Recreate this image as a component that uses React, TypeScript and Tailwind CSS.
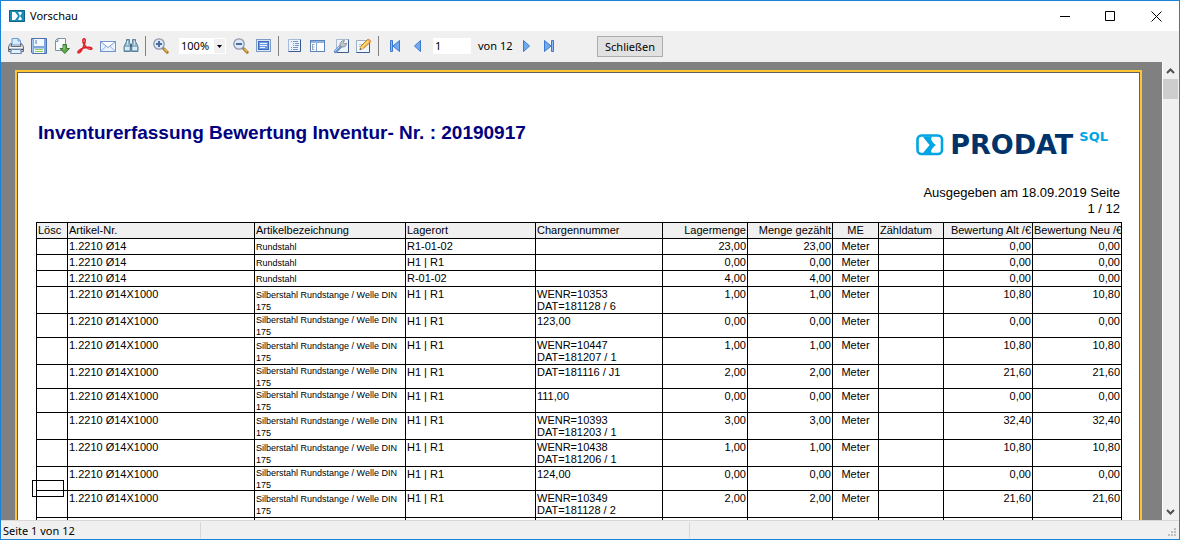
import type { ReactNode } from 'react'

interface Row {
  artikel: string
  name: string
  lagerort: string
  charge: string[]
  menge: string
  wert: string
}

const STANGE = 'Silberstahl Rundstange / Welle DIN 175'

const ROWS: Row[] = [
  { artikel: '1.2210 Ø14', name: 'Rundstahl', lagerort: 'R1-01-02', charge: [], menge: '23,00', wert: '0,00' },
  { artikel: '1.2210 Ø14', name: 'Rundstahl', lagerort: 'H1 | R1', charge: [], menge: '0,00', wert: '0,00' },
  { artikel: '1.2210 Ø14', name: 'Rundstahl', lagerort: 'R-01-02', charge: [], menge: '4,00', wert: '0,00' },
  { artikel: '1.2210 Ø14X1000', name: STANGE, lagerort: 'H1 | R1', charge: ['WENR=10353', 'DAT=181128 / 6'], menge: '1,00', wert: '10,80' },
  { artikel: '1.2210 Ø14X1000', name: STANGE, lagerort: 'H1 | R1', charge: ['123,00'], menge: '0,00', wert: '0,00' },
  { artikel: '1.2210 Ø14X1000', name: STANGE, lagerort: 'H1 | R1', charge: ['WENR=10447', 'DAT=181207 / 1'], menge: '1,00', wert: '10,80' },
  { artikel: '1.2210 Ø14X1000', name: STANGE, lagerort: 'H1 | R1', charge: ['DAT=181116 / J1'], menge: '2,00', wert: '21,60' },
  { artikel: '1.2210 Ø14X1000', name: STANGE, lagerort: 'H1 | R1', charge: ['111,00'], menge: '0,00', wert: '0,00' },
  { artikel: '1.2210 Ø14X1000', name: STANGE, lagerort: 'H1 | R1', charge: ['WENR=10393', 'DAT=181203 / 1'], menge: '3,00', wert: '32,40' },
  { artikel: '1.2210 Ø14X1000', name: STANGE, lagerort: 'H1 | R1', charge: ['WENR=10438', 'DAT=181206 / 1'], menge: '1,00', wert: '10,80' },
  { artikel: '1.2210 Ø14X1000', name: STANGE, lagerort: 'H1 | R1', charge: ['124,00'], menge: '0,00', wert: '0,00' },
  { artikel: '1.2210 Ø14X1000', name: STANGE, lagerort: 'H1 | R1', charge: ['WENR=10349', 'DAT=181128 / 2'], menge: '2,00', wert: '21,60' },
  // cut off by the lower edge of the preview
  { artikel: '', name: '', lagerort: '', charge: [], menge: '', wert: '' },
]

const COLUMNS = [
  { label: 'Lösc', width: 'w-[31px]', align: 'text-left' },
  { label: 'Artikel-Nr.', width: 'w-[187px]', align: 'text-left' },
  { label: 'Artikelbezeichnung', width: 'w-[151px]', align: 'text-left' },
  { label: 'Lagerort', width: 'w-[130px]', align: 'text-left' },
  { label: 'Chargennummer', width: 'w-[127px]', align: 'text-left' },
  { label: 'Lagermenge', width: 'w-[85px]', align: 'text-right' },
  { label: 'Menge gezählt', width: 'w-[85px]', align: 'text-right' },
  { label: 'ME', width: 'w-[46px]', align: 'text-center' },
  { label: 'Zähldatum', width: 'w-[65px]', align: 'text-left' },
  { label: 'Bewertung Alt /€', width: 'w-[89px]', align: 'text-right' },
  { label: 'Bewertung Neu /€', width: 'w-[89px]', align: 'text-right' },
]

function Svg({ children }: { children: ReactNode }) {
  return (
    <svg width="16" height="16" viewBox="0 0 16 16" fill="none" aria-hidden="true">
      {children}
    </svg>
  )
}

function PrinterIcon() {
  return (
    <Svg>
      <path d="M4 7V.5h6.5L12.5 3v4z" fill="#dcecff" stroke="#6c9bd8" />
      <path d="M10 .5V3h2.5" stroke="#6c9bd8" />
      <path d="M2.5 5.5h1v3h9v-3h1l2 3v5H.5v-5z" fill="#c3c7cd" stroke="#666c75" />
      <path d="M1.5 9.500h13" stroke="#f4f6f8" />
      <path d="M1 11.5h2m10 0h2" stroke="#4b5159" />
      <path d="M3.5 11.500h9l1 4h-11z" fill="#e6f1ff" stroke="#6587b8" />
    </Svg>
  )
}

function SaveIcon() {
  return (
    <Svg>
      <path d="M.5.5h15v15h-14l-1-1z" fill="#7fa6df" stroke="#4c72b0" />
      <path d="M3 1h10v7H3z" fill="#f3f8ff" />
      <path d="M5 2v4" stroke="#7ea4db" strokeWidth="1.5" />
      <path d="M3 10.5h10V15H3z" fill="#f5faf0" />
      <path d="M4 11.500h8M4 13.500h8" stroke="#8bc766" />
      <path d="M1.5 1.5v12" stroke="#a5c5f2" />
    </Svg>
  )
}

function ExportIcon() {
  return (
    <Svg>
      <path d="M3.5.5h8v12h-10v-10z" fill="#f9fbfd" stroke="#7e91aa" />
      <path d="M1.5 3.5H4v-3" fill="#cbd8e8" stroke="#7e91aa" />
      <path d="M9 6.500h3.500v4h3l-4.700 5-4.800-5h3z" fill="#62a64c" stroke="#3e7a32" />
      <path d="M10 7.500v4" stroke="#a7d694" />
    </Svg>
  )
}

function PdfIcon() {
  return (
    <Svg>
      <path
        d="M6.500 1C8.500 0 8.500 3 7.500 6c-1 3-3 7-5 8.500-1.500 1-2.200-.5-.5-2C4 10.500 9 9 12.500 9.200c3 .2 3 2.300 1 2.100C11 11 7 8 6.200 4.500 5.800 3 5.800 1.500 6.500 1z"
        stroke="#e01f26"
        strokeWidth="1.600"
      />
    </Svg>
  )
}

function MailIcon() {
  return (
    <Svg>
      <rect x=".5" y="3.500" width="15" height="10" fill="#eaf3ff" stroke="#7296cc" />
      <path d="M1 13l5.500-5M15 13L9.500 8" stroke="#94b2de" />
      <path d="M1 4l7 5.500L15 4" fill="#fff" stroke="#7b9fd3" />
    </Svg>
  )
}

function BinocularsIcon() {
  return (
    <Svg>
      <path d="M3.500 3.500v-2h3v3l1 2v7H1v-5z" fill="#8fb3c9" stroke="#5b829c" />
      <path d="M12.500 3.500v-2h-3v3l-1 2v7H15v-5z" fill="#8fb3c9" stroke="#5b829c" />
      <path d="M2 10.500h4.500M9.500 10.500H14" stroke="#dcebf3" strokeWidth="3" />
      <path d="M4.500 3v4M11.500 3v4" stroke="#d3e5ee" />
      <path d="M7 7.500h2" stroke="#36566d" strokeWidth="2" />
    </Svg>
  )
}

function ZoomIcon({ plus = false }: { plus?: boolean }) {
  return (
    <Svg>
      <path d="M9.500 9.500l2 2" stroke="#69717d" strokeWidth="2" />
      <path d="M11 11l3.200 3.200" stroke="#a97724" strokeWidth="3" strokeLinecap="round" />
      <path d="M11.200 10.700l3 3" stroke="#f1c45b" strokeWidth="1.300" />
      <circle cx="6" cy="6" r="5.200" fill="#dce9fb" stroke="#8c98aa" strokeWidth="1.300" />
      <path d="M3 6h6" stroke="#4c6a9b" strokeWidth="2" />
      {plus && <path d="M6 3v6" stroke="#4c6a9b" strokeWidth="2" />}
    </Svg>
  )
}

function FullPageIcon() {
  return (
    <Svg>
      <rect x=".5" y="1.500" width="14" height="12" fill="#d9e7fb" stroke="#7f9bc8" />
      <rect x="2.500" y="3.500" width="10" height="8" fill="#6c9bea" stroke="#4069b4" />
      <path d="M4 5.500h7M4 7.500h7M4 9.500h5" stroke="#e7f1ff" />
    </Svg>
  )
}

function OutlineIcon() {
  return (
    <Svg>
      <path d="M1.500 1.500h12v12h-12z" fill="#edf4ff" stroke="#a5bbdc" />
      <path d="M1.500 13.500h12v-12" stroke="#35598d" />
      <path d="M4 3.500h1m1 0h5M6 5.500h1m1 0h4M6 7.500h1m1 0h4M4 9.500h1m1 0h5M4 11.500h1m1 0h5" stroke="#7796c3" />
    </Svg>
  )
}

function ThumbsIcon() {
  return (
    <Svg>
      <rect x=".5" y="2.500" width="14" height="11" fill="#fff" stroke="#5c83b5" />
      <path d="M1 4h13" stroke="#8db4e4" strokeWidth="2" />
      <path d="M6.500 5v8" stroke="#86a5cd" />
      <path d="M2.500 6v6m0-5.500h2m-2 2.500h2m-2 2.500h2" stroke="#9aa7b8" />
    </Svg>
  )
}

function SettingsIcon() {
  return (
    <Svg>
      <path d="M3.500 1.500h12v13h-12z" fill="#f0f5fc" stroke="#a9b9cf" />
      <path d="M3.500 14.500h12v-13" stroke="#3e5c88" />
      <path d="M2.500 13.500L8 8" stroke="#6f95cd" strokeWidth="3.500" strokeLinecap="round" />
      <path d="M2 13l4.500-4.500" stroke="#b8d0f1" />
      <path d="M7.500 8.500l-.5-3 2-2.500 2.500-.5-1 2 1 1.500L13.500 5l-.5 2.500-2 1.500z" fill="#c2c7ce" stroke="#8c959f" />
    </Svg>
  )
}

function EditIcon() {
  return (
    <Svg>
      <path d="M.5 2.500h13v12H.5z" fill="#f2f7fe" stroke="#9db1cc" />
      <path d="M.5 14.500h13v-12" stroke="#3b5f95" />
      <path d="M3 6.500h4M3 8.500h2" stroke="#b1c6e2" />
      <path d="M4 11.500L5 8l7-7 3 2.500-7.500 7z" fill="#f7c54d" stroke="#bd8125" />
      <path d="M11 2l3 2.500L15.500 3 12.500.5z" fill="#e99a72" />
      <path d="M4 11.500L5 8l2.500 2.500z" fill="#f5dfb5" />
      <path d="M6.500 8.500L12.500 3" stroke="#ffe8a2" />
      <path d="M3.500 12l1-2 1 1z" fill="#333" />
    </Svg>
  )
}

function NavIcon({ back = false, bar = false }: { back?: boolean; bar?: boolean }) {
  return (
    <svg width="16" height="16" viewBox="0 0 16 16" aria-hidden="true" className={back ? '-scale-x-100' : ''}>
      {bar ? (
        <>
          <path d="M3.500 2.500L10 8l-6.500 5.500z" fill="#6fa9ee" stroke="#3b78cf" />
          <path d="M10.500 2.500h2v11h-2z" fill="#8dbcf3" stroke="#3b78cf" />
        </>
      ) : (
        <path d="M5.500 2.500l6 5.500-6 5.500z" fill="#6fa9ee" stroke="#3b78cf" />
      )}
    </svg>
  )
}

function ToolButton({ label, children }: { label: string; children: ReactNode }) {
  return (
    <button type="button" aria-label={label} title={label} className="flex h-6 w-[23px] shrink-0 items-center pl-1">
      {children}
    </button>
  )
}

function TitleBar() {
  return (
    <header className="flex h-[30px] shrink-0 items-center bg-white pl-2">
      <svg width="16" height="12" viewBox="0 0 16 12" aria-hidden="true">
        <rect width="16" height="12" rx="1" fill="#168dbb" />
        <path d="M.5.5h15v11H.5z" fill="none" stroke="#12627f" />
        <path d="M3 2h3l3 4-3 4H3z" fill="#fff" />
        <path d="M9 2h3l1 1-2 3 2 3-1 1H9l2-4z" fill="#fff" />
      </svg>
      <span className="ml-[5px] flex-1 text-[11px] leading-4">Vorschau</span>
      <button type="button" aria-label="Minimieren" className="flex h-full w-[46px] items-center justify-center">
        <svg width="11" height="11" viewBox="0 0 11 11" stroke="#000">
          <path d="M0 5.500h10" />
        </svg>
      </button>
      <button type="button" aria-label="Maximieren" className="flex h-full w-[45px] items-center justify-center">
        <svg width="11" height="11" viewBox="0 0 11 11" fill="none" stroke="#000">
          <path d="M.5.5h9v9h-9z" />
        </svg>
      </button>
      <button type="button" aria-label="Fenster schließen" className="flex h-full w-[46px] items-center justify-center">
        <svg width="11" height="11" viewBox="0 0 11 11" stroke="#000">
          <path d="M.5.5l10 10M10.500.5l-10 10" />
        </svg>
      </button>
    </header>
  )
}

function Toolbar() {
  return (
    <div className="flex h-[31px] shrink-0 items-center bg-[#f0f0f0] pb-px pl-[3px] text-[11px]">
      <ToolButton label="Drucken"><PrinterIcon /></ToolButton>
      <ToolButton label="Speichern"><SaveIcon /></ToolButton>
      <ToolButton label="Exportieren"><ExportIcon /></ToolButton>
      <ToolButton label="PDF"><PdfIcon /></ToolButton>
      <ToolButton label="E-Mail"><MailIcon /></ToolButton>
      <ToolButton label="Suchen"><BinocularsIcon /></ToolButton>
      <span className="mx-[3px] h-5 w-px bg-[#808080]" />
      <ToolButton label="Vergrößern"><ZoomIcon plus /></ToolButton>
      <div className="relative ml-[7px] h-4 w-[47px] bg-white">
        <select aria-label="Zoom" defaultValue="100%" className="h-full w-full appearance-none pl-0.5 leading-4 outline-none">
          <option>50%</option>
          <option>100%</option>
          <option>200%</option>
        </select>
        <span className="pointer-events-none absolute inset-y-px right-px flex w-[11px] items-center justify-center bg-[#f0f0f0]">
          <svg width="5" height="3" viewBox="0 0 5 3">
            <path d="M0 0h5L2.500 3z" />
          </svg>
        </span>
      </div>
      <span className="w-[3px]" />
      <ToolButton label="Verkleinern"><ZoomIcon /></ToolButton>
      <ToolButton label="Ganze Seite"><FullPageIcon /></ToolButton>
      <span className="mr-1 ml-[3px] h-5 w-px bg-[#808080]" />
      <ToolButton label="Gliederung"><OutlineIcon /></ToolButton>
      <ToolButton label="Miniaturansichten"><ThumbsIcon /></ToolButton>
      <ToolButton label="Seiteneinstellungen"><SettingsIcon /></ToolButton>
      <ToolButton label="Seite bearbeiten"><EditIcon /></ToolButton>
      <span className="mr-1 ml-[3px] h-5 w-px bg-[#808080]" />
      <ToolButton label="Erste Seite"><NavIcon back bar /></ToolButton>
      <ToolButton label="Vorherige Seite"><NavIcon back /></ToolButton>
      <input aria-label="Seite" defaultValue="1" className="ml-1 h-4 w-[38px] bg-white px-0.5 leading-4 outline-none" />
      <span className="ml-[7px] w-9 leading-4 whitespace-nowrap">von 12</span>
      <ToolButton label="Nächste Seite"><NavIcon /></ToolButton>
      <ToolButton label="Letzte Seite"><NavIcon bar /></ToolButton>
      <button type="button" className="mt-px ml-[37px] h-[21px] w-[66px] border border-[#adadad] bg-[#e1e1e1] leading-4">
        Schließen
      </button>
    </div>
  )
}

function Logo() {
  return (
    <div className="mt-[56px] mr-3.5 flex h-[30px] items-start font-['DejaVu_Sans',sans-serif] font-bold">
      <svg width="28" height="22" viewBox="0 0 28 22" className="mt-[5px]" aria-hidden="true">
        <rect x="1.500" y="1.500" width="24.500" height="18.500" rx="4" fill="#fff" stroke="#00a5e3" strokeWidth="2.600" />
        <path d="M7 2.500l4.500 8.500L7 19.500h9l-1-2.500c1-2.500 2.500-4.500 5-6-2.500-1.500-4-3.500-5-6l1-2.500z" fill="#00a5e3" />
        <path d="M6.500 4.500L12 11l-5.500 6.500" stroke="#fff" strokeWidth="2.500" fill="none" />
      </svg>
      <span className="ml-1.5 pt-0.5 text-[27px] leading-[28px] text-[#00336a]">PRODAT</span>
      <span className="ml-1.5 text-[13px] leading-4 text-[#00a5e3]">SQL</span>
    </div>
  )
}

function ReportTable() {
  return (
    <table className="mt-[5px] w-full table-fixed border-separate border-spacing-0 border-r border-black text-[11px] leading-3">
      <thead>
        <tr className="h-4 bg-[#f0f0f0]">
          {COLUMNS.map((c) => (
            <th
              key={c.label}
              scope="col"
              className={`${c.width} ${c.align} border-t border-l border-black px-px pt-px pb-0.5 font-normal whitespace-nowrap`}
            >
              {c.label}
            </th>
          ))}
        </tr>
      </thead>
      <tbody>
        {ROWS.map((row, i) => {
          const twoLines = row.charge.length > 1
          const cells = [
            '',
            row.artikel,
            row.name,
            row.lagerort,
            row.charge,
            row.menge,
            row.menge,
            row.artikel && 'Meter',
            '',
            row.wert,
            row.wert,
          ]
          const height = twoLines ? 'h-[27px]' : row.name === STANGE ? 'h-6' : 'h-4'

          return (
            <tr key={i} className={height}>
              {cells.map((cell, c) => (
                <td key={c} className={`${COLUMNS[c].align} border-t border-l border-black px-px py-0 align-top`}>
                  {c === 2 ? (
                    <div
                      className={
                        row.name !== STANGE ? 'pt-0.5 text-[9px]' : twoLines ? 'h-[26px] pt-0.5 text-[9px]' : 'h-[23px] text-[9px]'
                      }
                    >
                      {cell}
                    </div>
                  ) : Array.isArray(cell) ? (
                    cell.map((line, n) => (
                      <div key={line} className={n === 0 ? 'pt-px' : ''}>
                        {line}
                      </div>
                    ))
                  ) : (
                    <div className="pt-px">{cell}</div>
                  )}
                </td>
              ))}
            </tr>
          )
        })}
      </tbody>
    </table>
  )
}

function ReportPage() {
  return (
    <section className="relative min-w-0 flex-1 border-2 border-b-0 border-[#ffc431] font-['Liberation_Sans',Arial,sans-serif]">
      <div className="h-full border border-b-0 border-[#606060] bg-white pr-[17px] pl-[18px]">
        <div className="flex items-start justify-between">
          <h1 className="mt-12 pl-0.5 text-[19px] leading-6 font-bold whitespace-nowrap text-[#000080]">
            Inventurerfassung Bewertung Inventur- Nr. : 20190917
          </h1>
          <Logo />
        </div>
        <p className="mt-[26px] ml-auto w-[210px] pr-0.5 text-right text-[13px] leading-4">
          Ausgegeben am 18.09.2019 Seite
          <br />1 / 12
        </p>
        <ReportTable />
      </div>
      <div className="absolute top-[408px] left-[15px] h-[17px] w-8 border border-black" />
    </section>
  )
}

function ScrollBar() {
  return (
    <div className="flex w-[17px] shrink-0 flex-col border-l border-white bg-[#f0f0f0]">
      <button type="button" aria-label="Nach oben" className="flex h-[17px] w-[15px] items-center justify-center">
        <svg width="9" height="6" viewBox="0 0 9 6" fill="none" stroke="#505050" strokeWidth="2">
          <path d="M1 5l3.500-3.500L8 5" />
        </svg>
      </button>
      <div className="h-5 w-[15px] bg-[#cdcdcd]" />
      <button type="button" aria-label="Nach unten" className="mt-auto flex h-[17px] w-[15px] items-center justify-center">
        <svg width="9" height="6" viewBox="0 0 9 6" fill="none" stroke="#505050" strokeWidth="2">
          <path d="M1 1l3.500 3.500L8 1" />
        </svg>
      </button>
    </div>
  )
}

function StatusBar() {
  return (
    <footer className="flex h-[19px] shrink-0 items-center border-t border-[#d7d7d7] bg-[#f0f0f0] px-0.5 text-[11px] leading-4">
      <span className="w-[197px] pt-0.5">Seite 1 von 12</span>
      <span className="h-4 w-px bg-[#d7d7d7]" />
      <span className="w-[488px]" />
      <span className="h-4 w-px bg-[#d7d7d7]" />
      <svg width="9" height="9" viewBox="0 0 9 9" fill="#bfbfbf" className="mt-1 ml-auto" aria-hidden="true">
        <path d="M6 0h2v2H6zM3 3h2v2H3zM6 3h2v2H6zM0 6h2v2H0zM3 6h2v2H3zM6 6h2v2H6z" />
      </svg>
    </footer>
  )
}

export default function App() {
  return (
    <div className="flex h-screen flex-col overflow-hidden border border-[#1883d7] font-['Noto_Sans','Open_Sans',sans-serif] text-black">
      <TitleBar />
      <Toolbar />
      <main className="flex min-h-0 flex-1 bg-[#808080]">
        <div className="flex min-w-0 flex-1 overflow-hidden pt-2 pr-5 pl-3.5">
          <ReportPage />
        </div>
        <ScrollBar />
      </main>
      <StatusBar />
    </div>
  )
}
